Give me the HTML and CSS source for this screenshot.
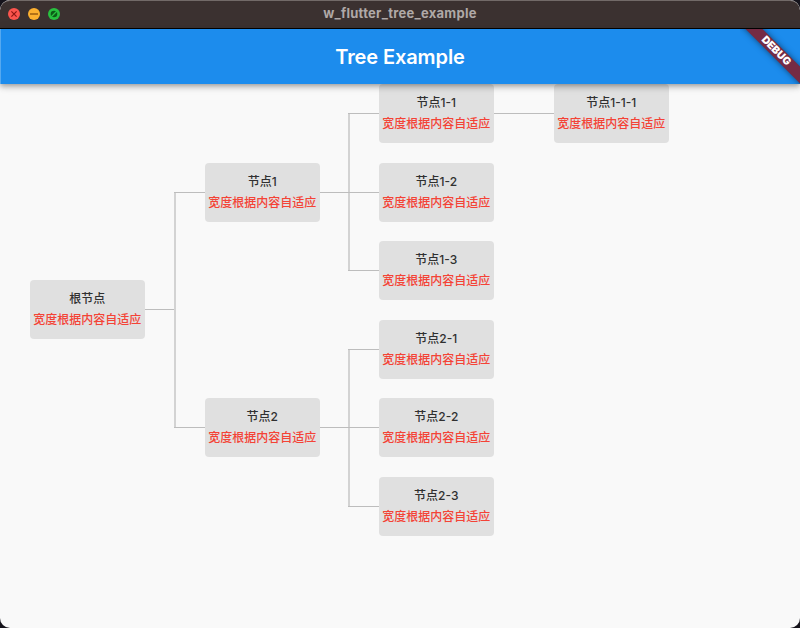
FILE: index.html
```html
<!DOCTYPE html>
<html lang="zh">
<head>
<meta charset="utf-8">
<title>w_flutter_tree_example</title>
<link rel="stylesheet" href="styles.css">
</head>
<body>
<div class="window">
  <header class="titlebar">
    <svg class="lights" width="60" height="12" viewBox="0 0 60 12">
      <circle cx="6" cy="6" r="6" fill="#fc544d"/>
      <path d="M3.4 3.4l5.2 5.2M8.6 3.4l-5.2 5.2" stroke="#8e1713" stroke-width="1.2"/>
      <circle cx="26" cy="6" r="6" fill="#fdb02f"/>
      <path d="M22 6h8" stroke="#9a5d10" stroke-width="1.7"/>
      <circle cx="46" cy="6" r="6" fill="#28c13f"/>
      <circle cx="46" cy="6" r="3.3" fill="#0b5c17"/>
      <path d="M43 9l6-6" stroke="#28c13f" stroke-width="1.3"/>
    </svg>
    <div class="window-title">w_flutter_tree_example</div>
  </header>
  <div class="appbar">
    <h1 class="app-title">Tree Example</h1>
    <div class="ribbon"><span class="ribbon-band">DEBUG</span></div>
  </div>
  <main class="tree">
    <div class="node root"><span>根节点</span><span class="note">宽度根据内容自适应</span></div>
    <svg class="link link-root" width="60" height="236" viewBox="0 0 60 236">
      <path class="v" d="M30 0V236"/><path class="h" d="M29 .5H60M0 117.5H29M29 235.5H60"/>
    </svg>
    <div class="node n1"><span>节点1</span><span class="note">宽度根据内容自适应</span></div>
    <div class="node n2"><span>节点2</span><span class="note">宽度根据内容自适应</span></div>
    <svg class="link link-1" width="59" height="158" viewBox="0 0 59 158">
      <path class="v" d="M29 0V158"/><path class="h" d="M28 .5H59M0 79.5H59M28 157.5H59"/>
    </svg>
    <svg class="link link-2" width="59" height="158" viewBox="0 0 59 158">
      <path class="v" d="M29 0V158"/><path class="h" d="M28 .5H59M0 78.5H59M28 157.5H59"/>
    </svg>
    <div class="node n11"><span>节点1-1</span><span class="note">宽度根据内容自适应</span></div>
    <div class="node n12"><span>节点1-2</span><span class="note">宽度根据内容自适应</span></div>
    <div class="node n13"><span>节点1-3</span><span class="note">宽度根据内容自适应</span></div>
    <div class="node n21"><span>节点2-1</span><span class="note">宽度根据内容自适应</span></div>
    <div class="node n22"><span>节点2-2</span><span class="note">宽度根据内容自适应</span></div>
    <div class="node n23"><span>节点2-3</span><span class="note">宽度根据内容自适应</span></div>
    <svg class="link link-11" width="60" height="1" viewBox="0 0 60 1"><path class="h" d="M0 .5H60"/></svg>
    <div class="node n111"><span>节点1-1-1</span><span class="note">宽度根据内容自适应</span></div>
  </main>
</div>
</body>
</html>
```
FILE: styles.css
```css
* { box-sizing: border-box; }
body {
  margin: 0;
  background: #15131b;
  font-family: Inter, "Noto Sans CJK SC", sans-serif;
}
.window {
  width: 800px;
  height: 628px;
  overflow: hidden;
  border-radius: 10px;
  background: #f9f9f9;
}
.titlebar {
  display: grid;
  grid-template-columns: 60px 1fr 60px;
  align-items: center;
  height: 29px;
  padding: 0 8px 1px;
  background: #3b3130;
  border-top: 1px solid #726a68;
  border-bottom: 1px solid #000;
  border-radius: 10px 10px 0 0;
}
.lights { display: block; }
.window-title {
  padding-bottom: 2px;
  text-align: center;
  font-size: 13px;
  line-height: 24px;
  font-weight: 700;
  letter-spacing: .28px;
  color: #b0a9a7;
}
.appbar {
  position: relative;
  z-index: 1;
  display: flex;
  align-items: center;
  justify-content: center;
  height: 55px;
  background: #1c8ced;
  border-left: 1px solid #55a9f0;
  box-shadow: 0 2px 4px -1px rgba(0,0,0,.2), 0 4px 5px rgba(0,0,0,.14), 0 1px 10px rgba(0,0,0,.12);
}
.app-title {
  margin: 0 1px 0 0;
  font-size: 20px;
  line-height: 24px;
  font-weight: 600;
  letter-spacing: -.1px;
  color: #fff;
}
.ribbon {
  position: absolute;
  top: 0;
  right: 0;
  width: 60px;
  height: 55px;
  overflow: hidden;
}
.ribbon-band {
  position: absolute;
  top: 16px;
  left: -14px;
  width: 100px;
  height: 12px;
  transform: rotate(45deg);
  background: #752b44;
  box-shadow: 0 0 6px rgba(0,0,0,.5);
  text-align: center;
  font: 900 10.5px/12px Inter, sans-serif;
  color: #fff;
}
.tree {
  display: grid;
  grid-template-columns: 115px 60px 115px 59px 115px 60px 115px;
  grid-template-rows: 79px 78px 79px 78px 79px 59px;
  padding-left: 30px;
  align-items: start;
}
.node {
  display: flex;
  flex-direction: column;
  align-items: center;
  width: 114.6px;
  height: 58.6px;
  padding-top: 8px;
  border-radius: 4px;
  background: #e0e0e0;
  color: #303030;
  font-size: 12px;
  line-height: 21px;
  font-weight: 500;
  white-space: nowrap;
}
.note { color: #f44336; }
.link { display: block; }
.v { stroke: #d3d3d3; stroke-width: 2; fill: none; }
.h { stroke: #bdbdbd; stroke-width: 1; fill: none; }
.root { grid-area: 1 / 1 / 7 / 2; margin-top: 196px; }
.link-root { grid-area: 1 / 2 / 7 / 3; margin-top: 108px; }
.n1 { grid-area: 2 / 3; }
.n2 { grid-area: 5 / 3; }
.link-1 { grid-area: 1 / 4 / 4 / 5; margin-top: 29px; }
.link-2 { grid-area: 4 / 4 / 7 / 5; margin-top: 29px; }
.n11 { grid-area: 1 / 5; }
.n12 { grid-area: 2 / 5; }
.n13 { grid-area: 3 / 5; }
.n21 { grid-area: 4 / 5; }
.n22 { grid-area: 5 / 5; }
.n23 { grid-area: 6 / 5; }
.link-11 { grid-area: 1 / 6; margin-top: 29px; }
.n111 { grid-area: 1 / 7; }
```
